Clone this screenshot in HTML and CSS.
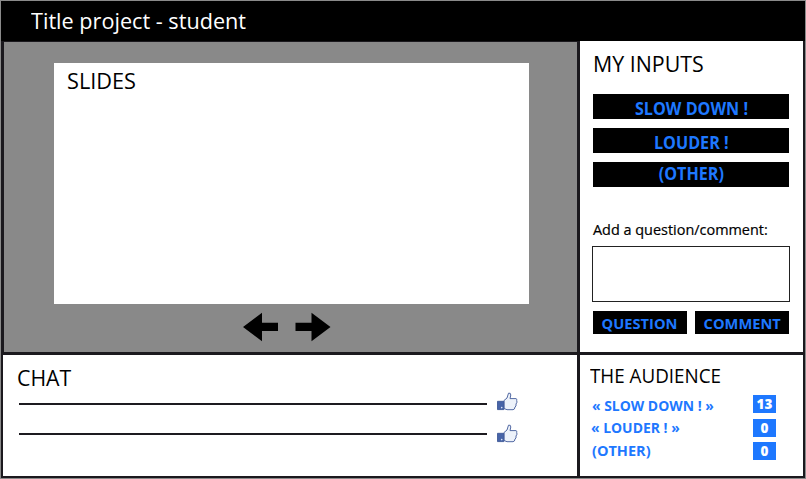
FILE: index.html
```html
<!DOCTYPE html>
<html lang="en">
<head>
<meta charset="utf-8">
<title>Title project - student</title>
<link rel="stylesheet" href="styles.css">
</head>
<body>
<svg width="0" height="0" class="defs" aria-hidden="true">
  <symbol id="thumb" viewBox="0 0 21 19">
    <path d="M7 8.5 L10 6 L11.5 1.2 Q13.8.5 13.8 3 L13 6.6 H19 Q20.3 7 19.7 8.4 L20 10.2 L19 12 L19 14 L18 15 L17.4 17 L16 17.7 H10 L7 16.5Z" fill="#edf2fa" stroke="#5269a3" stroke-width="1"/>
    <path d="M.5 9.3 H6.8 V17.6 H.5Z" fill="#4764a8" stroke="#334f91" stroke-width=".8"/>
    <circle cx="4.7" cy="15.6" r=".8" fill="#dfe7f7"/>
  </symbol>
</svg>
<div class="app">
  <header class="topbar"><h1 class="t t-title">Title project - student</h1></header>
  <main class="grid">
    <section class="stage">
      <div class="slide"><h2 class="t t-slides">SLIDES</h2></div>
      <nav class="arrows">
        <svg width="36" height="30" viewBox="0 0 36 30"><path d="M0 15 L19 .8 V10.8 H35 V19 H19 V29.3Z"/></svg>
        <svg width="36" height="30" viewBox="0 0 36 30"><path d="M35.5 15 L16.5 .8 V10.8 H.5 V19 H16.5 V29.3Z"/></svg>
      </nav>
    </section>
    <aside class="inputs">
      <h2 class="t t-inputs">MY INPUTS</h2>
      <div class="buttons">
        <button class="btn"><span class="t b-slow">SLOW DOWN !</span></button>
        <button class="btn"><span class="t b-loud">LOUDER !</span></button>
        <button class="btn"><span class="t b-other">(OTHER)</span></button>
      </div>
      <label class="t t-add" for="q">Add a question/comment:</label>
      <textarea id="q" class="field"></textarea>
      <div class="actions">
        <button class="btn small"><span class="t b-q">QUESTION</span></button>
        <button class="btn small"><span class="t b-c">COMMENT</span></button>
      </div>
    </aside>
    <section class="chat">
      <h2 class="t t-chat">CHAT</h2>
      <div class="message"><hr class="line"><svg width="21" height="19"><use href="#thumb"/></svg></div>
      <div class="message"><hr class="line"><svg width="21" height="19"><use href="#thumb"/></svg></div>
    </section>
    <section class="audience">
      <h2 class="t t-aud">THE AUDIENCE</h2>
      <div class="row"><span class="t a-slow">« SLOW DOWN ! »</span><b class="badge">13</b></div>
      <div class="row"><span class="t a-loud">« LOUDER ! »</span><b class="badge">0</b></div>
      <div class="row"><span class="t a-other">(OTHER)</span><b class="badge">0</b></div>
    </section>
  </main>
</div>
</body>
</html>
```
FILE: styles.css
```css
* { box-sizing: border-box; }
body { margin: 0; width: 806px; height: 479px; overflow: hidden; background: #fff; color: #000; font-family: "Open Sans", "Noto Sans", sans-serif; }
h1, h2, hr { margin: 0; font-weight: 400; }
svg { display: block; flex: none; }
.defs { display: none; }
.app { width: 806px; height: 479px; padding: 1px; background: #8a8a8a; }
.topbar { height: 40px; background: #000; padding: 4px 0 0 30px; }
.grid { display: grid; grid-template-columns: 573px 223px; grid-template-rows: 310px 121px; gap: 3px; width: 804px; height: 437px; padding: 1px 2px 2px 3px; background: #1b191e; }
.t { display: block; width: max-content; white-space: nowrap; transform-origin: 0 50%; }
.t-title, .t-slides, .t-inputs, .t-chat { font-size: 22.5px; line-height: 31px; }
.t-title { color: #fff; transform: scaleX(.962); }
.t-slides { transform: scaleX(.965); }
.t-inputs { transform: scaleX(.95); }
.t-chat { transform: scaleX(.945); }
.t-aud { font-size: 20.5px; line-height: 31px; margin-bottom: 4px; transform: scaleX(.918); }
.stage { background: #898989; padding: 21px 48px 0 49px; }
.slide { height: 241px; background: #fff; margin-left: 1px; padding: 2px 0 0 13px; }
.arrows { display: flex; gap: 16px; padding: 8px 0 0 190px; }
.inputs { background: #fff; margin-top: -1px; padding: 7px 14px 0 13px; }
.buttons { display: grid; gap: 9px; margin-top: 15px; }
.btn { display: flex; justify-content: center; align-items: center; height: 25px; border: 0; padding: 4px 0 0; background: #000; color: #1e78ff; font: 700 17px/22px "Open Sans", sans-serif; }
.btn .t { transform-origin: 50% 50%; transform: scaleX(.95); }
.btn:last-child .b-other { margin-top: -5px; }
.t-add { font-size: 14.5px; line-height: 20px; margin-top: 33px; -webkit-text-stroke: .2px #000; transform: scaleX(.995); }
.field { display: block; width: 198px; height: 56px; margin: 6px 0 0 -1px; border: 1px solid #222; resize: none; background: #fff; }
.actions { display: flex; gap: 8px; margin-top: 9px; }
.btn.small { width: 94px; height: 23px; font-size: 14.5px; padding: 2px 0 0; }
.btn.small .t { transform: scaleX(1.01); }
.chat { background: #fff; margin-left: -1px; padding: 7px 0 0 14px; }
.t-chat { margin-bottom: -4px; }
.message { display: flex; align-items: center; gap: 10px; height: 30px; padding-left: 2px; }
.message svg { margin-top: -5px; }
.message + .message svg { margin-top: -2px; }
.line { width: 468px; height: 2px; border: 0; background: #1d1b20; }
.audience { background: #fff; padding: 5px 27px 0 10px; }
.row { display: flex; justify-content: space-between; height: 23px; color: #1e78ff; font-size: 14.5px; font-weight: 700; line-height: 22px; }
.row:nth-child(n+3) { line-height: 20px; }
.row:nth-child(n+3) .badge { margin-top: 1px; }
.row .t { margin-left: 2px; transform: scaleX(.96); }
.row .a-loud { margin-left: 1px; }
.row .a-other { transform: scaleX(1); }
.row .badge { width: 23px; height: 18px; background: #1e78ff; color: #fff; font-size: 13.5px; line-height: 18px; text-align: center; }
```
